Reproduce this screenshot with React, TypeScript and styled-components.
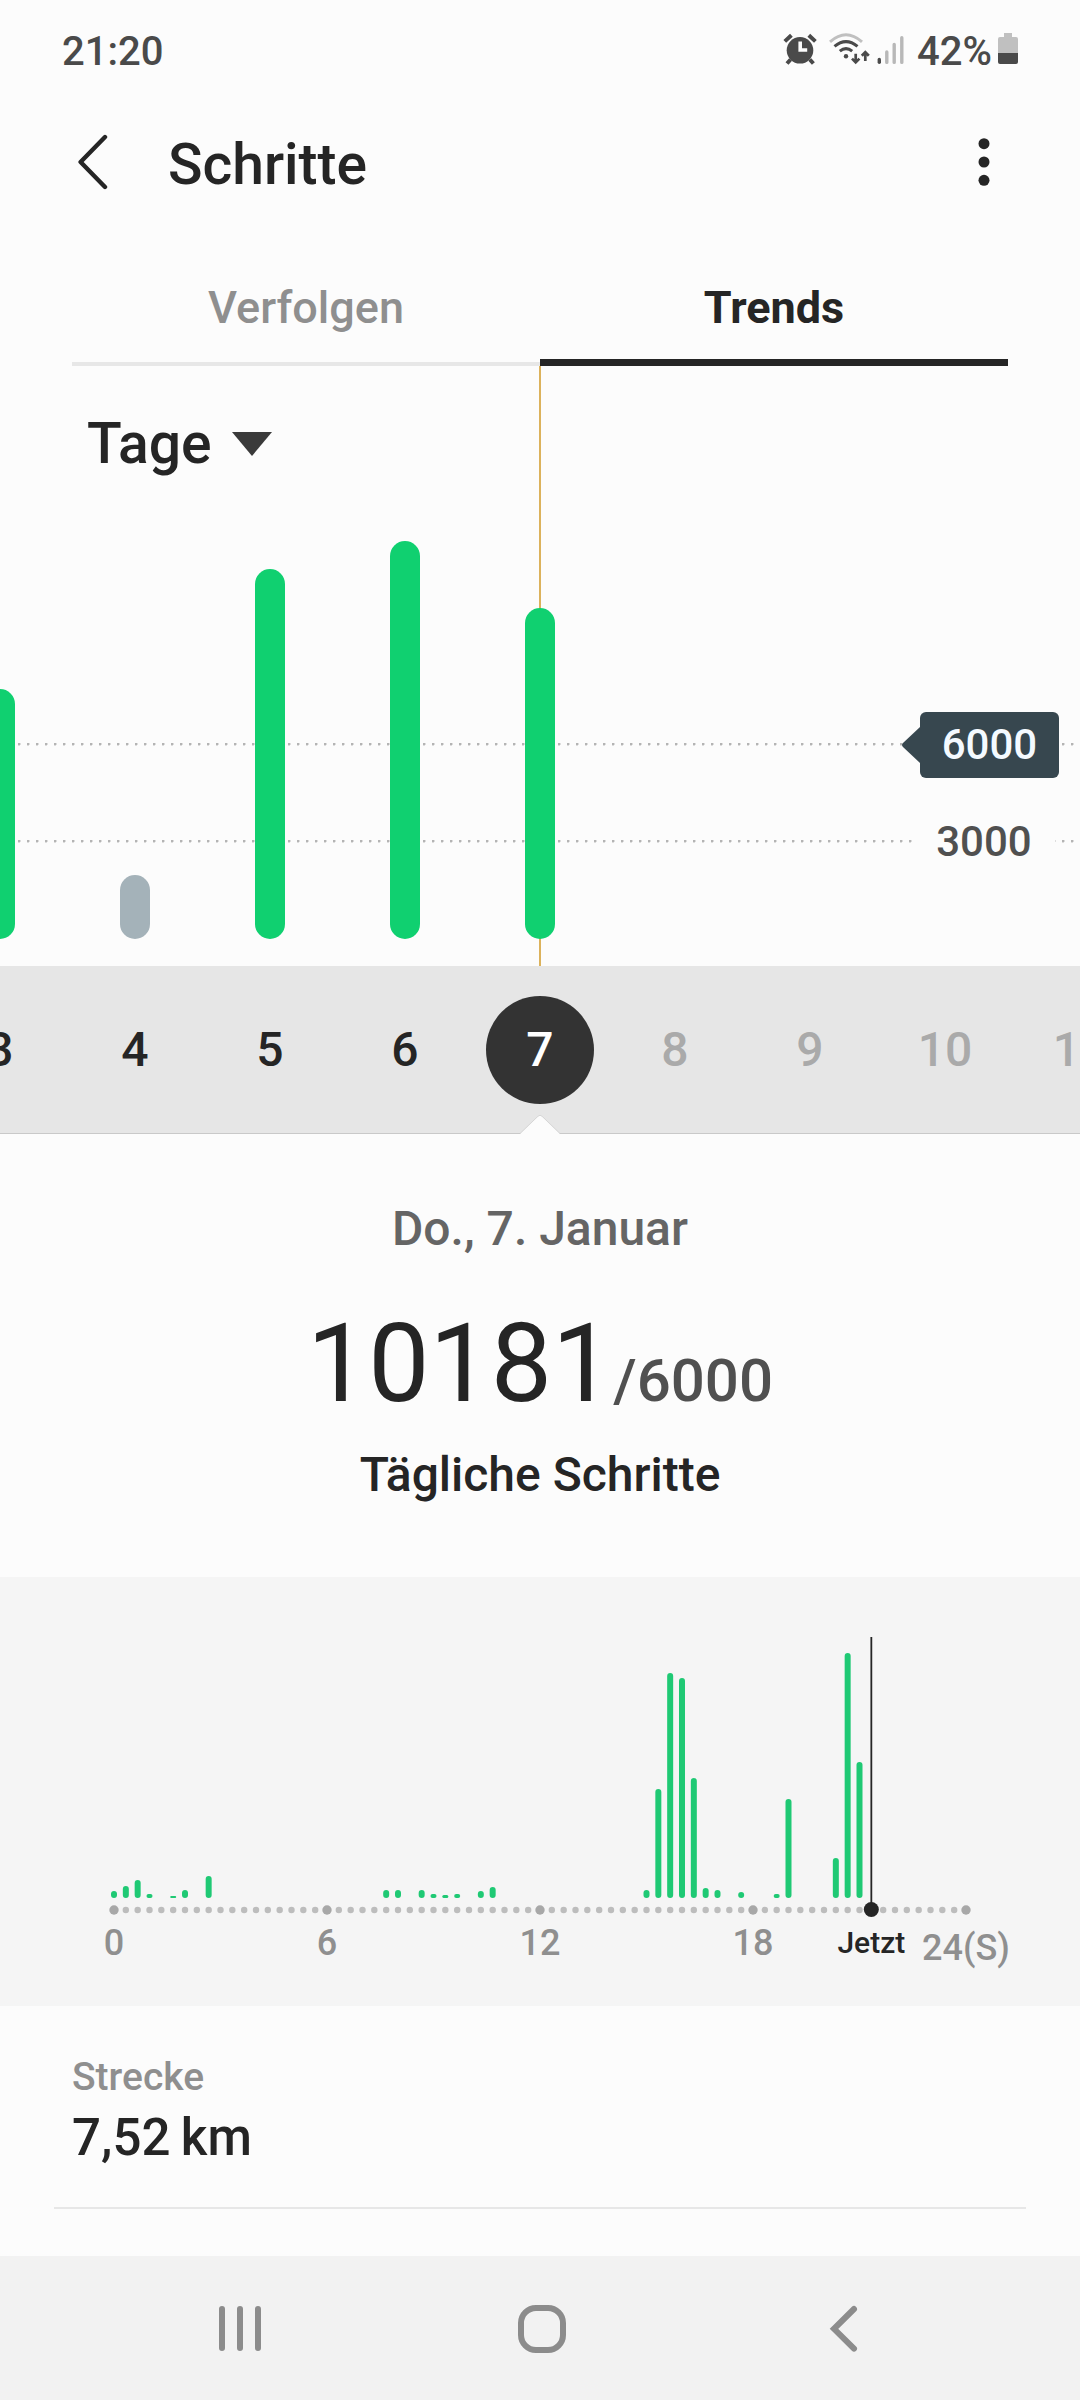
import React, { useState } from "react";
import styled, { createGlobalStyle } from "styled-components";

const ink = "#252525";
const green = "#10d070";
const muted = "#8f8f8f";

const GlobalStyle = createGlobalStyle`
  * { box-sizing: border-box; }
  body { margin: 0; background: #fcfcfc; }
  button, select { font: inherit; color: inherit; border: 0; background: none; padding: 0; margin: 0; cursor: pointer; }
  h1, p, dl, dt, dd { margin: 0; font-weight: inherit; }
  svg { display: block; }
`;

const Screen = styled.div`
  display: flex;
  flex-direction: column;
  min-height: 100vh;
  overflow: hidden;
  background: #fcfcfc;
  color: ${ink};
  font-family: Roboto, "Noto Sans", sans-serif;
  font-weight: 500;
`;

/* ---------- Status bar ---------- */

const StatusBar = styled.div`
  display: flex;
  align-items: center;
  justify-content: space-between;
  height: 102px;
  padding: 0 62px;
  color: #4a4a4a;
  font-size: 40px;
`;

const StatusIcons = styled.div`
  display: flex;
  align-items: center;
  gap: 6px;
`;

const AlarmIcon = () => (
  <svg width="40" height="36" viewBox="0 0 40 36" fill="none" stroke="#4a4a4a" strokeWidth="4" aria-hidden="true">
    <circle cx="17" cy="17.3" r="13.3" fill="#4a4a4a" stroke="none" />
    <path d="M1.8 8.4 8.4 2.3M25.8 2.3l6.6 6.1M7.6 26.5l-3.6 4M26.8 26.5l3.6 4" />
    <path d="M17.2 8.5v8.5h7" stroke="#fcfcfc" strokeWidth="3.6" />
  </svg>
);

const WifiIcon = () => (
  <svg width="42" height="36" viewBox="0 0 42 36" fill="none" stroke="#4a4a4a" strokeWidth="3" aria-hidden="true">
    <path d="M1 8.8Q17-5.4 33 8.8" stroke="#c0c0c0" />
    <path d="M5.5 13.4Q17 3.8 28.5 13.4M10.8 18.2Q17 13 23.2 18.2" />
    <circle cx="17" cy="23.3" r="2.2" fill="#4a4a4a" stroke="none" />
    <path d="M26.7 20.8v8.4M23 25.6l3.7 3.8 3.7-3.8M36.3 28v-8.6M32.8 22.8l3.5-3.7 3.5 3.7" strokeWidth="2.7" />
  </svg>
);

const SignalIcon = () => (
  <svg width="34" height="36" viewBox="0 0 34 36" strokeWidth="3.4" strokeLinecap="round" aria-hidden="true">
    <path d="M2.3 26.4v2.8" stroke="#4a4a4a" />
    <path d="M9.8 19v10.4M17.2 11.5v17.9M24.8 4.8v24.6" stroke="#b8b8b8" />
  </svg>
);

const BatteryIcon = () => (
  <svg width="20" height="36" viewBox="0 0 20 36" aria-hidden="true">
    <path d="M6 0h8v4h4q2 0 2 2v14H0V6q0-2 2-2h4z" fill="#c0c0c0" />
    <path d="M0 20h20v9q0 2-2 2H2q-2 0-2-2z" fill="#4a4a4a" />
  </svg>
);

/* ---------- Header and tabs ---------- */

const Header = styled.header`
  display: flex;
  align-items: center;
  height: 124px;
  padding: 0 68px;
`;

const IconButton = styled.button`
  display: grid;
  place-items: center;
`;

const Title = styled.h1`
  flex: 1;
  padding: 2px 0 0 52px;
  font-size: 57px;
  line-height: 68px;
`;

const Tabs = styled.div`
  display: grid;
  grid-template-columns: 1fr 1fr;
  padding: 0 72px;
`;

const Tab = styled.button<{ $active: boolean }>`
  height: 140px;
  padding-top: ${(p) => (p.$active ? 29 : 26)}px;
  border-bottom: ${(p) => (p.$active ? `7px solid ${ink}` : "4px solid #e7e7e7")};
  color: ${(p) => (p.$active ? ink : muted)};
  font-size: 45px;
  font-weight: ${(p) => (p.$active ? 700 : 500)};
`;

/* ---------- Trend chart ---------- */

const Trend = styled.section`
  position: relative;
  overflow: hidden;
  padding: 44px 0 27px;
`;

const Cursor = styled.div`
  position: absolute;
  top: 0;
  bottom: 0;
  left: 50%;
  width: 2px;
  margin-left: -1px;
  background: #dcb25c;
`;

const Period = styled.label`
  position: relative;
  display: inline-flex;
  align-items: center;
  gap: 20px;
  padding-left: 87px;
`;

const PeriodSelect = styled.select`
  appearance: none;
  field-sizing: content;
  height: 68px;
  font-size: 57px;
  line-height: 68px;
`;

const Plot = styled.div`
  position: relative;
  display: flex;
  justify-content: center;
  align-items: flex-end;
  height: 461px;
`;

const Column = styled.div`
  position: relative;
  display: flex;
  flex: none;
  justify-content: center;
  width: 135px;
`;

const Bar = styled.div<{ $reached: boolean }>`
  width: 30px;
  border-radius: 15px;
  background: ${(p) => (p.$reached ? green : "#a4b2b9")};
`;

const GridLine = styled.div`
  position: absolute;
  left: 0;
  right: 0;
  height: 3px;
  background: radial-gradient(circle at 1px 1px, #b4b4b4 1px, transparent 2px) 0 0 / 9px 3px;
`;

const AxisLabel = styled.span`
  position: absolute;
  top: 2px;
  right: 25px;
  width: 142px;
  transform: translateY(-50%);
  background: #fcfcfc;
  color: #505050;
  font-size: 42px;
  line-height: 66px;
  text-align: center;
`;

const GoalLabel = styled(AxisLabel)`
  right: 21px;
  width: 139px;
  border-radius: 6px;
  background: #37474f;
  color: #f4faff;
`;

const GoalArrow = styled.svg`
  position: absolute;
  top: 15px;
  right: 100%;
`;

/* ---------- Day strip ---------- */

const DayStrip = styled.nav`
  position: relative;
  display: flex;
  justify-content: center;
  align-items: center;
  height: 168px;
  overflow: hidden;
  border-bottom: 1px solid #c9c9c9;
  background: #e6e6e6;
`;

const DayCell = styled.div`
  display: flex;
  flex: none;
  justify-content: center;
  width: 135px;
`;

const Day = styled.button<{ $selected: boolean }>`
  width: 108px;
  height: 108px;
  border-radius: 50%;
  background: ${(p) => (p.$selected ? "#333333" : "transparent")};
  color: ${(p) => (p.$selected ? "#ffffff" : ink)};
  font-size: 48px;
  &:disabled { color: #aaaaaa; }
`;

const StripWrap = styled.div`
  position: relative;
`;

const Notch = styled.svg`
  position: absolute;
  bottom: 0;
  left: 50%;
  margin-left: -20px;
`;

/* ---------- Summary ---------- */

const Summary = styled.section`
  display: flex;
  flex-direction: column;
  align-items: center;
  padding: 67px 0 74px;
  font-size: 48px;
  line-height: 56px;
`;

const DateText = styled.p`
  color: #656565;
`;

const Count = styled.p`
  display: flex;
  align-items: baseline;
  margin: 51px 0 27px;
  font-size: 109px;
  font-weight: 400;
  line-height: 112px;
`;

const Goal = styled.span`
  color: #505050;
  font-size: 60px;
  font-weight: 500;
  line-height: 60px;
`;

/* ---------- Hour chart ---------- */

const Hours = styled.section`
  background: #f5f5f5;
`;

const HourSvg = styled.svg`
  width: 100%;
  height: auto;
`;

const HourLabel = styled.text`
  fill: ${muted};
  font-size: 36px;
  text-anchor: middle;
`;

const NowLabel = styled(HourLabel)`
  fill: ${ink};
  font-size: 30px;
`;

/* ---------- Metric ---------- */

const Metric = styled.dl`
  margin: 0 54px;
  padding: 47px 18px 39px;
  border-bottom: 2px solid #e7e7e7;
`;

const MetricName = styled.dt`
  color: ${muted};
  font-size: 39px;
  line-height: 48px;
`;

const MetricValue = styled.dd`
  padding-top: 7px;
  font-size: 51px;
  line-height: 60px;
`;

/* ---------- System navigation ---------- */

const SystemNav = styled.nav`
  display: grid;
  grid-template-columns: repeat(3, 1fr);
  height: 144px;
  margin-top: auto;
  padding: 0 85px 0 89px;
  background: #f2f2f2;
`;

const STEP_HEIGHT = 0.0325;

const days = [
  { day: 3, steps: 7692 },
  { day: 4, steps: 1969 },
  { day: 5, steps: 11385 },
  { day: 6, steps: 12246 },
  { day: 7, steps: 10181 },
  { day: 8, steps: 0 },
  { day: 9, steps: 0 },
  { day: 10, steps: 0 },
  { day: 11, steps: 0 },
];

const GOAL = 6000;
const TODAY = 7;

/* [twenty-minute slot, bar height] */
const slots: [number, number][] = [
  [0, 7], [1, 12], [2, 18], [3, 4], [5, 2], [6, 8], [8, 22],
  [23, 8], [24, 8], [26, 8], [27, 4], [28, 3], [29, 4], [31, 7], [32, 11],
  [45, 8], [46, 109], [47, 225], [48, 220], [49, 120], [50, 10], [51, 8], [53, 6],
  [56, 4], [57, 99], [61, 40], [62, 245], [63, 136],
];

const slotX = (slot: number) => 114 + (slot * 852) / 72;

const HourChart = () => (
  <HourSvg viewBox="0 0 1080 429" role="img" aria-label="Schritte pro Stunde">
    {slots.map(([slot, h]) => (
      <rect key={slot} x={slotX(slot) - 3} y={321 - h} width="6" height={h} rx={Math.min(3, h / 2)} fill="#1fc974" />
    ))}
    {Array.from({ length: 73 }, (_, i) => (
      <circle key={i} cx={slotX(i)} cy="333" r={i % 18 ? 3.2 : 4.7} fill={i % 18 ? "#bdbdbd" : "#a8a8a8"} />
    ))}
    <path d={`M${slotX(64)} 60V333`} stroke={ink} strokeWidth="1.8" />
    <circle cx={slotX(64)} cy="332.5" r="7.5" fill={ink} />
    {[0, 6, 12, 18].map((hour) => (
      <HourLabel key={hour} x={slotX(hour * 3)} y="378">{hour}</HourLabel>
    ))}
    <NowLabel x={slotX(64)} y="376">Jetzt</NowLabel>
    <HourLabel x={slotX(72)} y="383">24(S)</HourLabel>
  </HourSvg>
);

export default function App() {
  const [tab, setTab] = useState("Trends");
  const [selected, setSelected] = useState(TODAY);

  return (
    <Screen>
      <GlobalStyle />
      <StatusBar>
        <span>21:20</span>
        <StatusIcons>
          <AlarmIcon />
          <WifiIcon />
          <SignalIcon />
          <span>42%</span>
          <BatteryIcon />
        </StatusIcons>
      </StatusBar>

      <Header>
        <IconButton aria-label="Zurück">
          <svg width="48" height="60" viewBox="0 0 48 60" fill="none" stroke={ink} strokeWidth="4.4" strokeLinecap="round" strokeLinejoin="round">
            <path d="M37 3 12.6 28 37 53" />
          </svg>
        </IconButton>
        <Title>Schritte</Title>
        <IconButton aria-label="Weitere Optionen">
          <svg width="56" height="60" viewBox="0 0 56 60" fill={ink}>
            <circle cx="28" cy="9.7" r="5.5" />
            <circle cx="28" cy="28" r="5.5" />
            <circle cx="28" cy="46.3" r="5.5" />
          </svg>
        </IconButton>
      </Header>

      <Tabs role="tablist">
        {["Verfolgen", "Trends"].map((name) => (
          <Tab key={name} role="tab" aria-selected={tab === name} $active={tab === name} onClick={() => setTab(name)}>
            {name}
          </Tab>
        ))}
      </Tabs>

      <Trend>
        <Cursor />
        <Period>
          <PeriodSelect aria-label="Zeitraum" defaultValue="Tage">
            <option>Tage</option>
            <option>Wochen</option>
            <option>Monate</option>
          </PeriodSelect>
          <svg width="40" height="24" viewBox="0 0 40 24" fill="#3a3a3a" aria-hidden="true">
            <path d="M0 0h40L20 24z" />
          </svg>
        </Period>
        <Plot>
          <GridLine style={{ bottom: GOAL * STEP_HEIGHT - 2 }}>
            <GoalLabel>
              <GoalArrow width="18" height="36" viewBox="0 0 18 36" fill="#37474f" aria-hidden="true">
                <path d="M18 0v36L1 20q-2-2 0-4z" />
              </GoalArrow>
              6000
            </GoalLabel>
          </GridLine>
          <GridLine style={{ bottom: Math.floor(3000 * STEP_HEIGHT) - 1 }}>
            <AxisLabel>3000</AxisLabel>
          </GridLine>
          {days.map(({ day, steps }) => (
            <Column key={day}>
              <Bar $reached={steps >= GOAL} style={{ height: Math.round(steps * STEP_HEIGHT) }} />
            </Column>
          ))}
        </Plot>
      </Trend>

      <StripWrap>
        <DayStrip aria-label="Tage">
          {days.map(({ day }) => (
            <DayCell key={day}>
              <Day $selected={day === selected} disabled={day > TODAY} onClick={() => setSelected(day)}>
                {day}
              </Day>
            </DayCell>
          ))}
        </DayStrip>
        <Notch width="40" height="19" viewBox="0 0 40 19" fill="#fcfcfc" aria-hidden="true">
          <path d="M0 19 18 1.4q2-1.8 4 0L40 19z" />
          <path d="M0 18.5 18 1.2q2-1.8 4 0L40 18.5" fill="none" stroke="#d6d6d6" />
        </Notch>
      </StripWrap>

      <Summary>
        <DateText>Do., 7. Januar</DateText>
        <Count>
          10181<Goal>/6000</Goal>
        </Count>
        <p>Tägliche Schritte</p>
      </Summary>

      <Hours>
        <HourChart />
      </Hours>

      <Metric>
        <MetricName>Strecke</MetricName>
        <MetricValue>7,52{"\u2009"}km</MetricValue>
      </Metric>

      <SystemNav aria-label="System">
        <IconButton aria-label="Letzte Apps">
          <svg width="48" height="56" viewBox="0 0 48 56" stroke="#8c8c8c" strokeWidth="6" strokeLinecap="round">
            <path d="M6 9v39M24 9v39M42 9v39" />
          </svg>
        </IconButton>
        <IconButton aria-label="Startseite">
          <svg width="56" height="56" viewBox="0 0 56 56" fill="none" stroke="#8c8c8c" strokeWidth="6">
            <rect x="7" y="8" width="42" height="42" rx="15" />
          </svg>
        </IconButton>
        <IconButton aria-label="Zurück">
          <svg width="56" height="56" viewBox="0 0 56 56" fill="none" stroke="#8c8c8c" strokeWidth="6" strokeLinecap="round">
            <path d="M38 9 18 28.8 38 48.6" />
          </svg>
        </IconButton>
      </SystemNav>
    </Screen>
  );
}
